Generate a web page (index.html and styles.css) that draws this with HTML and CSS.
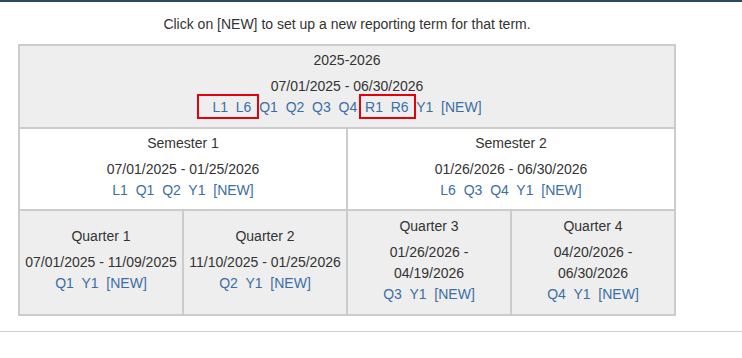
FILE: index.html
```html
<!DOCTYPE html>
<html lang="en">
<head>
    <meta charset="UTF-8">
    <title>Reporting Terms</title>
    <link rel="stylesheet" href="styles.css">
</head>
<body>
    <div class="topbar"></div>

    <div class="content">
        <p class="hint">Click on [NEW] to set up a new reporting term for that term.</p>

        <table class="terms">
            <tr class="shaded">
                <td colspan="4" class="year">
                    <div class="term-name">2025-2026</div>
                    <div>07/01/2025 - 06/30/2026</div>
                    <div class="links">
                        <span class="mark mark-l"><a href="#">L1</a>&nbsp; <a href="#">L6</a></span>&nbsp;
                        <a href="#">Q1</a>&nbsp; <a href="#">Q2</a>&nbsp; <a href="#">Q3</a>&nbsp; <a href="#">Q4</a>&nbsp;
                        <span class="mark mark-r"><a href="#">R1</a>&nbsp; <a href="#">R6</a></span>&nbsp;
                        <a href="#">Y1</a>&nbsp; <a href="#">[NEW]</a>
                    </div>
                </td>
            </tr>
            <tr>
                <td colspan="2" class="semester">
                    <div class="term-name">Semester 1</div>
                    <div>07/01/2025 - 01/25/2026</div>
                    <div class="links"><a href="#">L1</a>&nbsp; <a href="#">Q1</a>&nbsp; <a href="#">Q2</a>&nbsp; <a href="#">Y1</a>&nbsp; <a href="#">[NEW]</a></div>
                </td>
                <td colspan="2" class="semester">
                    <div class="term-name">Semester 2</div>
                    <div>01/26/2026 - 06/30/2026</div>
                    <div class="links"><a href="#">L6</a>&nbsp; <a href="#">Q3</a>&nbsp; <a href="#">Q4</a>&nbsp; <a href="#">Y1</a>&nbsp; <a href="#">[NEW]</a></div>
                </td>
            </tr>
            <tr class="shaded">
                <td class="quarter">
                    <div class="term-name">Quarter 1</div>
                    <div>07/01/2025 - 11/09/2025</div>
                    <div class="links"><a href="#">Q1</a>&nbsp; <a href="#">Y1</a>&nbsp; <a href="#">[NEW]</a></div>
                </td>
                <td class="quarter">
                    <div class="term-name">Quarter 2</div>
                    <div>11/10/2025 - 01/25/2026</div>
                    <div class="links"><a href="#">Q2</a>&nbsp; <a href="#">Y1</a>&nbsp; <a href="#">[NEW]</a></div>
                </td>
                <td class="quarter">
                    <div class="term-name">Quarter 3</div>
                    <div>01/26/2026 -<br>04/19/2026</div>
                    <div class="links"><a href="#">Q3</a>&nbsp; <a href="#">Y1</a>&nbsp; <a href="#">[NEW]</a></div>
                </td>
                <td class="quarter">
                    <div class="term-name">Quarter 4</div>
                    <div>04/20/2026 -<br>06/30/2026</div>
                    <div class="links"><a href="#">Q4</a>&nbsp; <a href="#">Y1</a>&nbsp; <a href="#">[NEW]</a></div>
                </td>
            </tr>
        </table>
    </div>

    <div class="divider"></div>
</body>
</html>
```

FILE: styles.css
```css
body {
    margin: 0;
    font-family: "Liberation Sans", Arial, sans-serif;
    font-size: 14px;
    line-height: 21px;
    color: #333;
    background: #fff;
}
.topbar {
    height: 2px;
    background: #2b4a62;
}
.content {
    width: 694px;
    padding: 0 18px;
    box-sizing: border-box;
    text-align: center;
}
.hint {
    margin: 0;
    padding: 12px 0 9px;
}
.terms {
    width: 100%;
    border-collapse: collapse;
    table-layout: fixed;
}
.terms td {
    border: 2px solid #ccc;
    text-align: center;
    vertical-align: top;
    padding: 4px 2px 8px;
}
.terms td.year {
    padding-bottom: 9px;
}
.shaded td {
    background: #eee;
}
.term-name {
    margin-bottom: 5px;
}
.terms td.quarter {
    vertical-align: middle;
    height: 98px;
    padding: 0 2px 5px;
}
.links a {
    color: #3a6ea5;
    text-decoration: none;
}
/* red highlight boxes around the L and R terms */
.mark {
    position: relative;
}
.mark::after {
    content: "";
    position: absolute;
    top: -5px;
    bottom: -4px;
    border: 2px solid #e3000f;
}
.mark-l::after {
    left: -15px;
    right: -8px;
}
.mark-r::after {
    left: -6px;
    right: -7px;
}
.divider {
    margin-top: 15px;
    border-top: 1px solid #ccc;
}
```
